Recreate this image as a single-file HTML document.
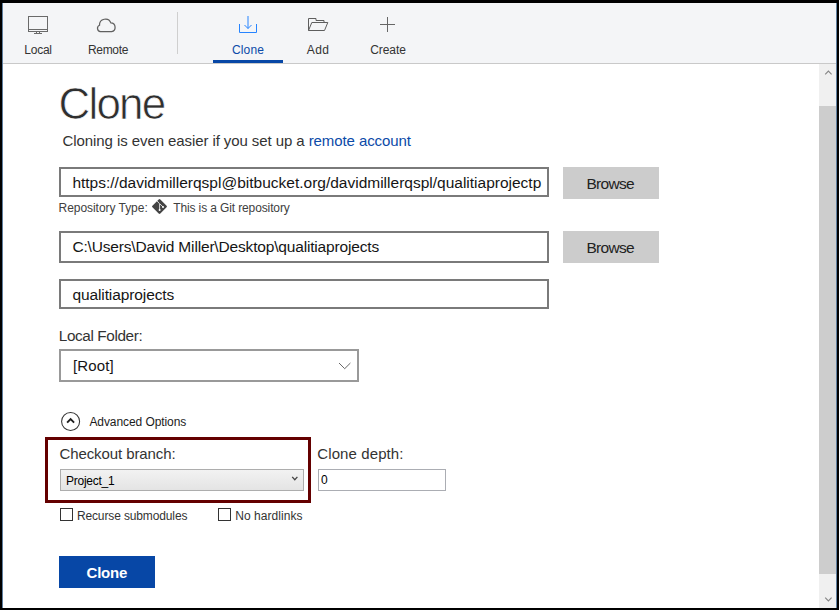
<!DOCTYPE html>
<html>
<head>
<meta charset="utf-8">
<title>Clone</title>
<style>
html,body{margin:0;padding:0;}
body{width:839px;height:610px;overflow:hidden;background:#000;font-family:"Liberation Sans",sans-serif;color:#333;position:relative;}
.abs{position:absolute;}
#win{position:absolute;left:2px;top:3px;width:835px;height:605px;background:#fff;border-left:1px solid #5f7f9f;border-right:1px solid #5f7f9f;box-sizing:border-box;}
#bar{position:absolute;left:3px;top:3px;width:833px;height:60px;background:#f4f5f7;border-bottom:1px solid #c9c9c9;box-sizing:content-box;}
.tab{position:absolute;top:3px;width:70px;height:60px;text-align:center;font-size:12px;color:#333;}
.tab span{position:absolute;left:0;width:70px;top:40px;line-height:14px;white-space:nowrap;}
.tab svg{position:absolute;}
.t{position:absolute;white-space:nowrap;line-height:1;}
.inp{position:absolute;box-sizing:border-box;border:2px solid #7a7a7a;background:#fff;}
.btn{position:absolute;background:#cccccc;width:96px;height:32px;}
.chk{position:absolute;box-sizing:border-box;width:13px;height:13px;border:1px solid #333;background:#fff;}
</style>
</head>
<body>
<div id="win"></div>
<div id="bar"></div>

<!-- toolbar tabs -->
<div class="tab" style="left:3px;"><span id="tLocal" style="letter-spacing:-0.25px">Local</span></div>
<div class="tab" style="left:73px;"><span id="tRemote" style="letter-spacing:-0.3px">Remote</span></div>
<div class="abs" style="left:177px;top:12px;width:1px;height:42px;background:#cfcfcf;"></div>
<div class="tab" style="left:213px;color:#0b4aa8;"><span id="tClone" style="letter-spacing:0.15px">Clone</span></div>
<div class="abs" style="left:213px;top:60px;width:70px;height:3px;background:#0747a6;"></div>
<div class="tab" style="left:283px;"><span id="tAdd" style="letter-spacing:0.35px">Add</span></div>
<div class="tab" style="left:353px;"><span id="tCreate" style="letter-spacing:-0.1px">Create</span></div>

<!-- scrollbar -->
<div class="abs" style="left:819px;top:64px;width:17px;height:544px;background:#f0f0f0;"></div>
<div class="abs" style="left:819px;top:106px;width:17px;height:468px;background:#cdcdcd;"></div>

<!-- heading -->
<div class="t" id="h1" style="left:58.5px;top:81.5px;font-size:44px;letter-spacing:-1.8px;color:#2f2f2f;-webkit-text-stroke:0.7px #fff;">Clone</div>
<div class="t" id="sub" style="left:62.6px;top:133px;font-size:15px;letter-spacing:-0.083px;">Cloning is even easier if you set up a <span style="color:#0b4aa8;">remote account</span></div>

<!-- inputs -->
<div class="inp" style="left:59px;top:167px;width:490px;height:30px;"></div>
<div class="t" id="url" style="color:#151515;left:72.4px;top:174.5px;font-size:15.5px;letter-spacing:0px;">https://davidmillerqspl@bitbucket.org/davidmillerqspl/qualitiaprojectp</div>
<div class="btn" style="left:563px;top:167px;"></div>
<div class="t" id="br1" style="color:#222;left:586.4px;top:176px;font-size:15.5px;letter-spacing:-0.7px;">Browse</div>

<div class="t" id="rt" style="color:#404040;left:58.5px;top:201.8px;font-size:12px;letter-spacing:-0.04px;">Repository Type:</div>
<div class="t" id="git" style="color:#404040;left:173.2px;top:201.8px;font-size:12px;letter-spacing:-0.12px;">This is a Git repository</div>

<div class="inp" style="left:59px;top:231px;width:490px;height:32px;"></div>
<div class="t" id="path" style="color:#151515;left:72.4px;top:238.5px;font-size:15.5px;letter-spacing:-0.17px;">C:\Users\David Miller\Desktop\qualitiaprojects</div>
<div class="btn" style="left:563px;top:231px;"></div>
<div class="t" id="br2" style="color:#222;left:586.4px;top:240px;font-size:15.5px;letter-spacing:-0.7px;">Browse</div>

<div class="inp" style="left:59px;top:279px;width:490px;height:30px;"></div>
<div class="t" id="name" style="color:#151515;left:72.4px;top:286.5px;font-size:15.5px;letter-spacing:-0.1px;">qualitiaprojects</div>

<div class="t" id="lf" style="left:58.8px;top:328px;font-size:15.3px;letter-spacing:-0.38px;">Local Folder:</div>
<div class="inp" style="left:59px;top:349px;width:300px;height:33px;border-color:#999;"></div>
<div class="t" id="root" style="color:#151515;left:73px;top:358px;font-size:15px;letter-spacing:0.14px;">[Root]</div>

<div class="t" id="adv" style="color:#1c1c1c;left:89.4px;top:416px;font-size:12px;letter-spacing:-0.08px;">Advanced Options</div>

<!-- highlight -->
<div class="abs" style="left:45px;top:437px;width:266px;height:66px;box-sizing:border-box;border:3px solid #640000;"></div>
<div class="t" id="cb" style="left:59.4px;top:446px;font-size:15px;letter-spacing:-0.087px;">Checkout branch:</div>
<div class="abs" style="left:60px;top:469px;width:244px;height:22px;box-sizing:border-box;border:1px solid #adadad;background:linear-gradient(#f2f2f2,#e4e4e4);"></div>
<div class="t" id="proj" style="left:66.1px;top:475px;font-size:12px;color:#000;letter-spacing:-0.275px;">Project_1</div>

<div class="t" id="cd" style="left:317.3px;top:446px;font-size:15px;letter-spacing:0.1px;">Clone depth:</div>
<div class="abs" style="left:318px;top:469px;width:128px;height:22px;box-sizing:border-box;border:1px solid #abadb3;background:#fff;"></div>
<div class="t" id="zero" style="left:321px;top:474px;font-size:12px;color:#000;">0</div>

<div class="chk" style="left:60px;top:508px;"></div>
<div class="t" id="rs" style="left:76.9px;top:510px;font-size:12px;letter-spacing:-0.129px;">Recurse submodules</div>
<div class="chk" style="left:218px;top:508px;"></div>
<div class="t" id="nh" style="left:235.2px;top:510px;font-size:12px;letter-spacing:0.06px;">No hardlinks</div>

<div class="abs" style="left:59px;top:556px;width:96px;height:32px;background:#0747a6;"></div>
<div class="t" id="cl" style="letter-spacing:-0.25px;left:86.6px;top:565px;font-size:15px;font-weight:bold;color:#fff;">Clone</div>

<!-- icons -->
<svg class="abs" style="left:0;top:0;" width="839" height="610" viewBox="0 0 839 610" fill="none">
  <!-- monitor -->
  <g stroke="#6a6a6a" stroke-width="1">
    <rect x="28.5" y="16.5" width="19" height="15"/>
    <path d="M28.5 29.5H47.5M36.5 32V33.5M39.5 32V33.5M34 33.5H42"/>
  </g>
  <!-- cloud -->
  <path d="M100.4 31.6A3.3 3.3 0 0 1 99.5 25.3A5.9 5.9 0 0 1 110.9 22.9A4.4 4.4 0 0 1 111.6 31.6Z" stroke="#606060" stroke-width="1.25"/>
  <!-- clone (download) -->
  <g stroke="#2684ff" stroke-width="1">
    <path d="M239.5 24V32.5H256.5V24"/>
    <path d="M248 16V28.5M244.5 25L248 28.5L251.5 25"/>
  </g>
  <!-- folder -->
  <g stroke="#5e5e5e" stroke-width="1" stroke-linejoin="miter">
    <path d="M308.5 30.5V18.5H316V20.5H324V22.5"/>
    <path d="M308.5 30.5L311.8 22.5H327.8L324.5 30.5Z"/>
  </g>
  <!-- plus -->
  <path d="M387.5 17V32M380 24.5H395" stroke="#666" stroke-width="1"/>
  <!-- git diamond -->
  <g>
    <rect x="153.9" y="200.9" width="11.2" height="11.2" rx="1.2" transform="rotate(45 159.5 206.5)" fill="#444"/>
    <path d="M157 200.9L159.6 203.8V210M160 204L163 206.9" stroke="#fff" stroke-width="0.8"/>
    <circle cx="159.6" cy="210" r="1" fill="#fff"/>
    <circle cx="163" cy="206.9" r="1" fill="#fff"/>
  </g>
  <!-- local folder chevron -->
  <path d="M339 363L344.7 368.7L350.4 363" stroke="#666" stroke-width="1"/>
  <!-- advanced options circle -->
  <circle cx="70.6" cy="421.4" r="9" stroke="#333" stroke-width="1.05"/>
  <path d="M67.1 422.6L70.6 419L74.1 422.6" stroke="#1e1e1e" stroke-width="1.9"/>
  <!-- select chevron -->
  <path d="M292.2 476.9L294.8 479.8L297.4 476.9" stroke="#444" stroke-width="1.3"/>
  <!-- scrollbar arrows -->
  <path d="M825.2 74.3L828.4 71L831.6 74.3" stroke="#858585" stroke-width="1.1"/>
  <path d="M825.2 597.6L828.4 600.9L831.6 597.6" stroke="#858585" stroke-width="1.1"/>
</svg>

</body>
</html>
